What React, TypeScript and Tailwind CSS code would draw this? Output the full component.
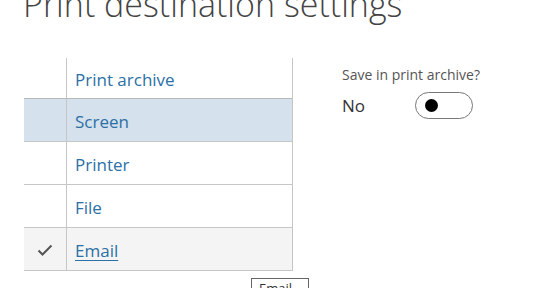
const rows = [
  { label: "Print archive", state: "first" },
  { label: "Screen", state: "selected" },
  { label: "Printer", state: "" },
  { label: "File", state: "" },
  { label: "Email", state: "current" },
];

function Check() {
  return (
    <svg width="16" height="12" viewBox="0 0 16 12" fill="none">
      <path d="M1.5 6.5 L5.5 10.5 L14.5 1.5" stroke="#555" strokeWidth="2" />
    </svg>
  );
}

export default function App() {
  return (
    <div className="relative h-[288px] w-[548px] overflow-hidden bg-white font-['Open_Sans',sans-serif]">
      <h1 className="mt-[-16px] pl-[23px] text-[34px] font-light leading-[40px] text-[#444]">
        Print destination settings
      </h1>
      <div className="mt-[34px] flex pl-[24px]">
        <div className="w-[269px] border-r border-[#c6c6c6]">
          {rows.map((r) => (
            <div
              key={r.label}
              className={
                "flex border-b border-[#c6c6c6] " +
                (r.state === "first" ? "h-[41px] border-b-[#b8b8b8] " : "h-[43px] ") +
                (r.state === "selected" ? "bg-[#d5e1ec] " : r.state === "current" ? "bg-[#f4f4f4] " : "")
              }
            >
              <div className="flex w-[42px] items-center justify-center pt-[2px]">
                {r.state === "current" && <Check />}
              </div>
              <div className="flex flex-1 items-center border-l border-[#c6c6c6] pl-[8px] pt-[3px]">
                <span
                  className={
                    "text-[17px] text-[#2b70a6] " + (r.state === "current" ? "underline underline-offset-[3px]" : "")
                  }
                >
                  {r.label}
                </span>
              </div>
            </div>
          ))}
        </div>
        <div className="ml-[49px] pt-[8px]">
          <div className="text-[14px] leading-[18px] text-[#555]">Save in print archive?</div>
          <div className="mt-[8px] flex items-center">
            <span className="w-[73px] text-[17px] text-[#333]">No</span>
            <span className="flex h-[27px] w-[58px] items-center rounded-full border-[1.5px] border-[#777] pl-[9px]">
              <span className="h-[13px] w-[13px] rounded-full bg-black" />
            </span>
          </div>
        </div>
      </div>
      <div className="absolute left-[251px] top-[278px] h-[22px] w-[58px] border border-[#666] bg-white px-[7px] text-[13px] leading-[18px] text-[#333]">
        Email
      </div>
    </div>
  );
}
